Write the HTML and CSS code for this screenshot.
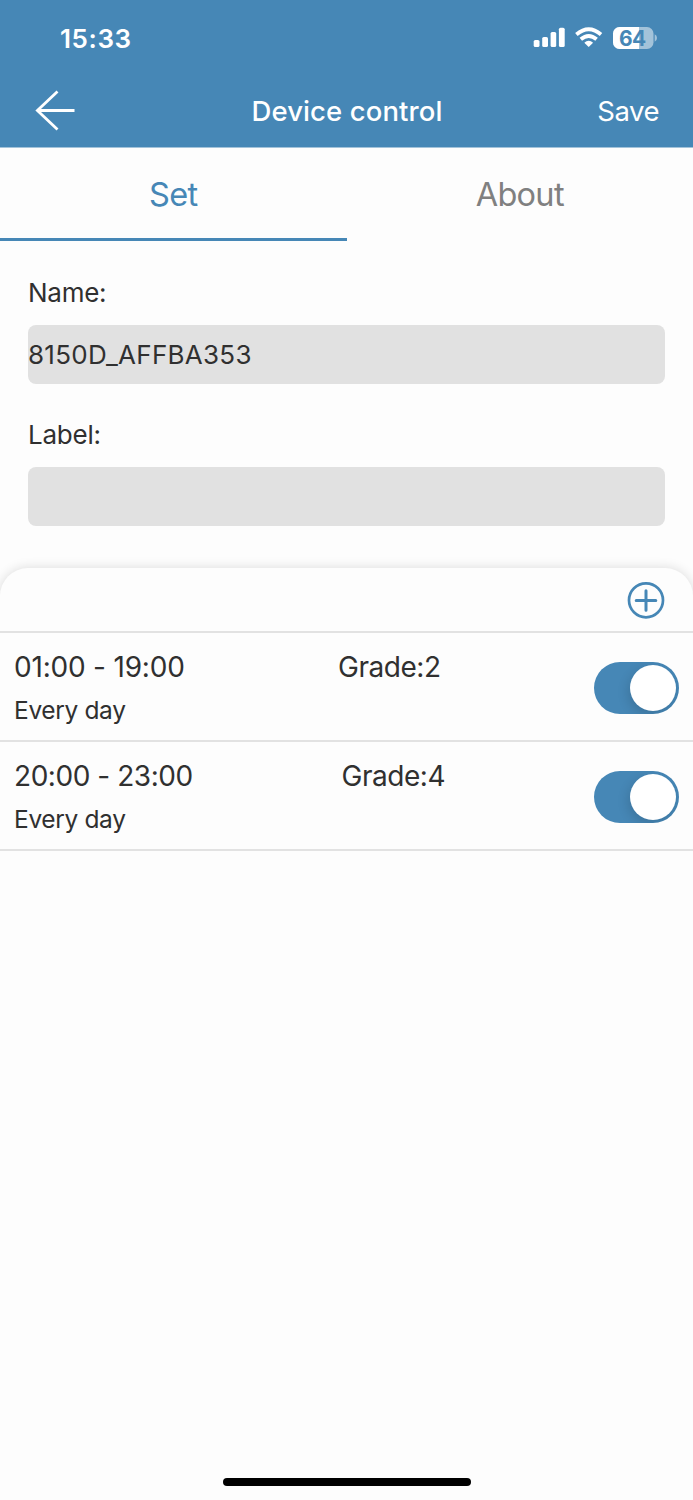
FILE: index.html
```html
<!DOCTYPE html>
<html lang="en">
<head>
<meta charset="utf-8">
<title>Device control</title>
<link rel="stylesheet" href="styles.css">
</head>
<body>
<div class="screen">
  <header class="header">
    <div class="status">
      <span class="clock">15:33</span>
      <svg class="indicators" width="124" height="24" viewBox="0 0 124 24">
        <g fill="#fff">
          <rect x="0.7" y="14" width="5.8" height="7" rx="1.6"/>
          <rect x="9.2" y="11" width="5.8" height="10" rx="1.6"/>
          <rect x="17.6" y="6" width="5.6" height="15" rx="1.6"/>
          <rect x="25.9" y="1.7" width="5.8" height="19.3" rx="1.6"/>
        </g>
        <g fill="none" stroke="#fff" stroke-width="3.8">
          <path d="M43.400 8.500Q55.700-2 68 8.500"/>
          <path d="M47.800 13.300Q55.700 6.600 63.600 13.300"/>
        </g>
        <path d="M51.300 16.700Q55.700 13 60.100 16.700L55.700 21Z" fill="#fff"/>
        <rect x="80" y="1" width="40.5" height="22" rx="6.5" fill="#a3c3da"/>
        <path d="M86.500 1H106V23H86.500A6.500 6.500 0 0 1 80 16.500V7.500A6.500 6.500 0 0 1 86.500 1Z" fill="#fff"/>
        <path d="M121.700 8.200Q124 9.500 124 12T121.700 15.800Z" fill="#a3c3da"/>
        <text class="battery" x="99.300" y="19.600" text-anchor="middle">64</text>
      </svg>
    </div>
    <nav class="navbar">
      <svg class="back" width="40" height="42" viewBox="0 0 40 42" fill="none" stroke="#fff" stroke-width="2.800">
        <path d="M22.500 1.500L2.400 20.500L22.500 39.500M2.400 20.500H39.500"/>
      </svg>
      <h1 class="title">Device control</h1>
      <span class="save">Save</span>
    </nav>
  </header>
  <div class="tabs">
    <div class="tab active"><span class="set">Set</span></div>
    <div class="tab"><span class="about">About</span></div>
  </div>
  <main class="form">
    <div class="label">Name:</div>
    <div class="field"><span class="value">8150D_AFFBA353</span></div>
    <div class="label">Label:</div>
    <div class="field"></div>
  </main>
  <section class="sheet">
    <div class="toolbar">
      <svg width="38" height="38" viewBox="0 0 38 38" fill="none" stroke="#4687b6">
        <circle cx="19" cy="19.300" r="17" stroke-width="2.700"/>
        <path d="M9.200 19.500H28.800M19 9.700V29.300" stroke-width="3" stroke-linecap="round"/>
      </svg>
    </div>
    <div class="row">
      <div class="times"><div class="time first">01:00 - 19:00</div><div class="repeat">Every day</div></div>
      <div class="grade">Grade:2</div>
      <div class="switch"><div class="knob"></div></div>
    </div>
    <div class="row">
      <div class="times"><div class="time">20:00 - 23:00</div><div class="repeat">Every day</div></div>
      <div class="grade second">Grade:4</div>
      <div class="switch"><div class="knob"></div></div>
    </div>
  </section>
  <div class="home"></div>
</div>
</body>
</html>
```
FILE: styles.css
```css
* { box-sizing: border-box; }
body { margin: 0; background: #fdfdfd; color: #303030; font-family: Inter, "Liberation Sans", sans-serif; }
.screen { width: 693px; height: 1500px; display: flex; flex-direction: column; overflow: hidden; background: #fdfdfd; white-space: nowrap; }
.header { flex: none; height: 148px; background: #4687b6; border-bottom: 1px solid #a3c3da; color: #fff; }
.status { height: 74px; display: flex; justify-content: space-between; align-items: flex-start; padding: 26px 36px 0 60px; }
.clock { font-size: 26px; font-weight: 600; line-height: 25px; letter-spacing: 0.6px; }
.battery { font-size: 21px; font-weight: 700; fill: #4687b6; letter-spacing: -0.6px; }
.navbar { height: 73px; display: grid; grid-template-columns: 1fr auto 1fr; align-items: center; padding: 0 34px 0 35px; }
.title { margin: 0; font-size: 27.500px; font-weight: 500; line-height: 40px; letter-spacing: 0.1px; }
.save { justify-self: end; font-size: 27.500px; line-height: 40px; letter-spacing: -0.5px; }
.tabs { flex: none; height: 93px; display: flex; }
.tab { flex: 1; display: flex; justify-content: center; padding-top: 27px; font-size: 32.500px; line-height: 40px; color: #808080; border-bottom: 3px solid transparent; letter-spacing: -0.7px; }
.tab.active { color: #4687b6; border-bottom-color: #4687b6; }
.form { flex: none; height: 327px; padding: 36px 28px 0; }
.label { height: 30px; margin-bottom: 18px; font-size: 26px; line-height: 31px; letter-spacing: -0.25px; }
.field { height: 58.500px; margin-bottom: 35.500px; border-radius: 8px; background: #e1e1e1; font-size: 26px; line-height: 59px; letter-spacing: 0.27px; }
.sheet { flex: none; border-radius: 28px 28px 0 0; box-shadow: 0 0 12px rgba(0, 0, 0, 0.14); clip-path: inset(-20px 0 0 0); background: #fdfdfd; }
.toolbar { height: 65px; display: flex; justify-content: flex-end; padding: 13px 28px 0 0; border-bottom: 2px solid #e2e2e2; }
.row { height: 109px; display: grid; grid-template-columns: 324px 1fr 85.500px; padding: 14px 14px 0 14px; border-bottom: 2px solid #e2e2e2; }
.time, .grade { font-size: 28px; line-height: 40px; letter-spacing: -0.45px; }
.time.first { letter-spacing: -0.2px; }
.repeat { font-size: 24.500px; line-height: 30px; margin-top: 8px; letter-spacing: -0.35px; }
.grade.second { padding-left: 3.500px; }
.switch { width: 85.500px; height: 52px; margin-top: 14.500px; padding: 3px; border-radius: 26px; background: #4687b6; display: flex; justify-content: flex-end; overflow: hidden; }
.knob { width: 46px; height: 46px; border-radius: 50%; background: #fff; box-shadow: -2px 4px 12px rgba(0, 0, 0, 0.14); }
.home { width: 248px; height: 8px; margin: auto auto 14px 222.500px; border-radius: 4px; background: #000; }
```
